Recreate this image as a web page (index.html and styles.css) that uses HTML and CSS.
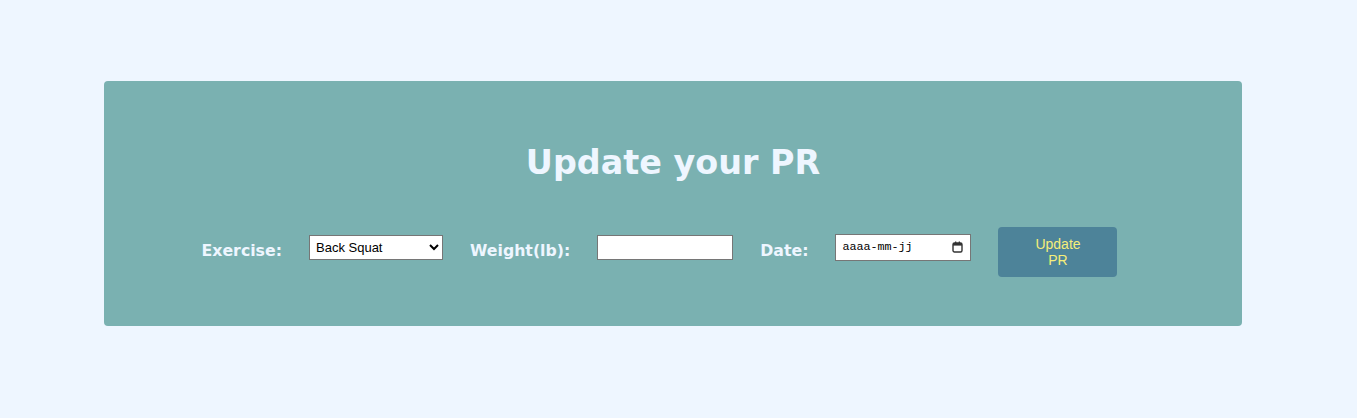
FILE: index.html
```html
<!DOCTYPE html>
<html lang="fr">
<head>
<meta charset="utf-8">
<title>Update your PR</title>
<link rel="stylesheet" href="styles.css">
</head>
<body>
<main class="page">
  <section class="card">
    <h1 class="title">Update your PR</h1>
    <form class="form-row">
      <label class="label" for="exercise">Exercise:</label>
      <select class="field select" id="exercise">
        <option>Back Squat</option>
        <option>Front Squat</option>
        <option>Deadlift</option>
      </select>
      <label class="label" for="weight">Weight(lb):</label>
      <input class="field text" id="weight" type="text">
      <label class="label" for="date">Date:</label>
      <div class="field date" id="date">
        <span class="date-text">aaaa-mm-jj</span>
        <svg class="cal" width="11" height="12" viewBox="0 0 11 12">
          <rect x="1" y="2" width="9" height="9" rx="1.5" fill="none" stroke="#333" stroke-width="1.4"/>
          <rect x="1" y="2" width="9" height="2.6" fill="#333"/>
          <rect x="3" y="0.5" width="1.3" height="2.5" fill="#333"/>
          <rect x="6.7" y="0.5" width="1.3" height="2.5" fill="#333"/>
        </svg>
      </div>
      <button class="btn" type="button">Update PR</button>
    </form>
  </section>
</main>
</body>
</html>
```
FILE: styles.css
```css
html, body {
  margin: 0;
  padding: 0;
  background: #eef6ff;
}
.page {
  padding: 81px 0 0 104px;
  height: 418px;
  box-sizing: border-box;
}
.card {
  width: 1138px;
  height: 245px;
  box-sizing: border-box;
  background: #7ab1b1;
  border-radius: 4px;
  padding-top: 60px;
  display: flex;
  flex-direction: column;
  align-items: center;
}
.title {
  margin: 0;
  font-family: "DejaVu Sans", sans-serif;
  font-weight: bold;
  font-size: 33.4px;
  line-height: 44px;
  color: #eef6ff;
}
.form-row {
  margin-top: 38px;
  display: flex;
  align-items: center;
  padding-right: 27px;
  height: 50px;
}
.label {
  font-family: "DejaVu Sans", sans-serif;
  font-weight: bold;
  font-size: 15.75px;
  color: #eef6ff;
  margin-right: 27px;
  margin-top: 4px;
}
.field {
  box-sizing: border-box;
  border: 1px solid #767676;
  background: #fff;
  margin-right: 27px;
  font-family: "Liberation Sans", Arial, sans-serif;
  font-size: 13px;
}
.select {
  width: 134px;
  height: 25px;
  margin-top: -2px;
  color: #000;
  padding: 0 2px;
}
.text {
  width: 136px;
  height: 25px;
  margin-top: -2px;
}
.date {
  width: 136px;
  height: 27px;
  margin-top: -2px;
  display: flex;
  align-items: center;
  justify-content: space-between;
  padding: 0 7px 0 6px;
}
.date-text {
  font-family: "Liberation Mono", "DejaVu Sans Mono", monospace;
  font-size: 11.7px;
  color: #000;
}
.cal {
  display: block;
}
.btn {
  width: 119px;
  height: 50px;
  margin-top: 8px;
  border: none;
  border-radius: 4px;
  background: #4d8399;
  color: #f5ee7a;
  font-family: "Liberation Sans", Arial, sans-serif;
  font-size: 14px;
  line-height: 16px;
  padding: 0 30px;
}
```
